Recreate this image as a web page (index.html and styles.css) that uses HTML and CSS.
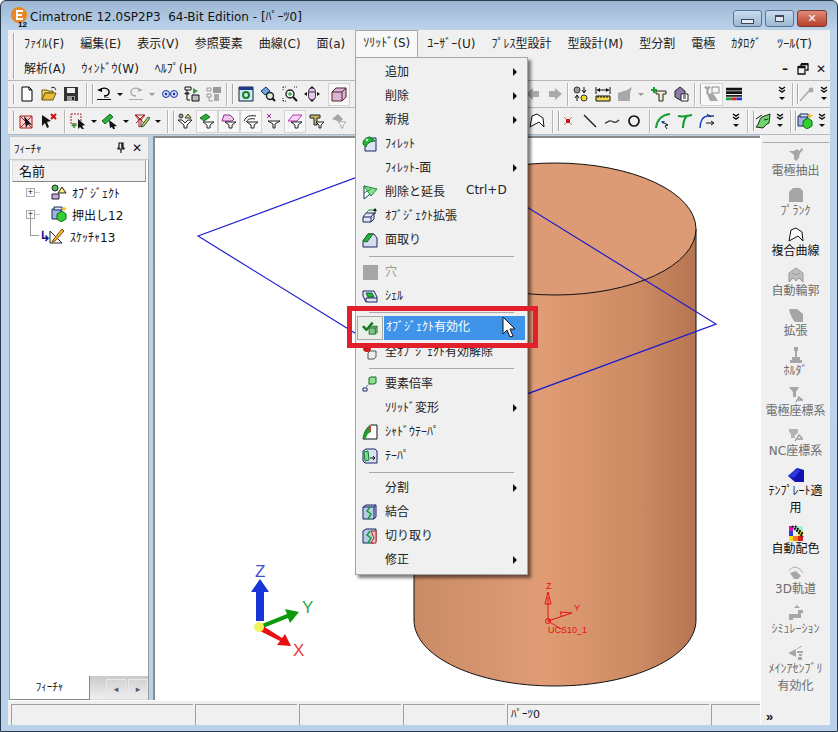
FILE: index.html
```html
<!doctype html>
<html lang="ja">
<head>
  <meta charset="utf-8">
  <title>CimatronE</title>
  <link rel="stylesheet" href="styles.css">
</head>
<body>
<svg class="sprite" xmlns="http://www.w3.org/2000/svg">
  <symbol id="new" viewBox="0 0 16 16"><path d="M3 1h7l3 3v11H3z" fill="#fff" stroke="#000"/><path d="M10 1v3h3" fill="none" stroke="#000"/></symbol>
  <symbol id="open" viewBox="0 0 16 16"><path d="M1 4h5l1 1h5v2H4l-3 7z" fill="#f4d35e" stroke="#6b5a10"/><path d="M1 14l3-7h11l-3 7z" fill="#e8b93c" stroke="#6b5a10"/><path d="M10 2l3-1 2 3" fill="none" stroke="#222"/></symbol>
  <symbol id="save" viewBox="0 0 16 16"><path d="M1 1h14v14H1z" fill="#333"/><path d="M4 2h8v5H4z" fill="#eee"/><path d="M4 10h8v5H4z" fill="#9a9a9a"/><path d="M9 11h2v3H9z" fill="#222"/></symbol>
  <symbol id="undo" viewBox="0 0 16 16"><path d="M5 3C9 1 14 3 13 7c-.5 2-3 3-5 3" fill="none" stroke="#000" stroke-width="1.300"/><path d="M1 4l5-2v4z" fill="#000"/><path d="M1 13h14v1H1z" fill="#000"/><path d="M8 11h5v1H8z" fill="#888"/></symbol>
  <symbol id="redo" viewBox="0 0 16 16"><path d="M11 3C7 1 2 3 3 7c.5 2 3 3 5 3" fill="none" stroke="#aaa" stroke-width="1.300"/><path d="M15 4l-5-2v4z" fill="#aaa"/><path d="M1 13h14v1H1z" fill="#aaa"/></symbol>
  <symbol id="glasses" viewBox="0 0 16 16"><circle cx="4" cy="8" r="3.500" fill="#cfe0ff" stroke="#1a2f9c"/><circle cx="12" cy="8" r="3.500" fill="#cfe0ff" stroke="#1a2f9c"/><circle cx="4" cy="8" r="1.200" fill="#1a2f9c"/><circle cx="12" cy="8" r="1.200" fill="#1a2f9c"/></symbol>
  <symbol id="attach" viewBox="0 0 16 16"><path d="M1 1h6v3H1zM1 7h4v1H1zM3 4v10h3" fill="none" stroke="#111"/><path d="M8 9h7v6H8z" fill="#bbb" stroke="#111"/><path d="M9 2l5 3-5 3z" fill="#3a9a3a"/></symbol>
  <symbol id="attachoff" viewBox="0 0 16 16"><path d="M7 1h8v6H7z" fill="#999"/><path d="M1 2h4v3H1zM1 8h4v3H1zM3 11v4h4" fill="none" stroke="#999"/><path d="M8 8h5v7H8z" fill="#aaa"/></symbol>
  <symbol id="zoomall" viewBox="0 0 16 16"><path d="M1 1h14v14H1z" fill="#cfe8f5" stroke="#123"/><path d="M1 1h14v3H1z" fill="#1d3a8a"/><circle cx="8" cy="9" r="3" fill="none" stroke="#1b7f2c" stroke-width="2"/></symbol>
  <symbol id="zoomwin" viewBox="0 0 16 16"><path d="M1 5l5-4 4 4-5 4z" fill="#6fa2d8" stroke="#123a7a"/><circle cx="10" cy="10" r="3.500" fill="#d9f0d9" stroke="#222" stroke-width="1.400"/><path d="M12 12l3 3" stroke="#111" stroke-width="2"/></symbol>
  <symbol id="zoomin" viewBox="0 0 16 16"><path d="M1 1h3M1 1v3M12 1h3M1 12v3M1 15h3" stroke="#222" fill="none" stroke-dasharray="1 1"/><circle cx="8" cy="8" r="4" fill="#e6f7e6" stroke="#222" stroke-width="1.400"/><path d="M11 11l4 4" stroke="#111" stroke-width="2"/><path d="M6 8h4M8 6v4" stroke="#1a8a2a"/></symbol>
  <symbol id="pan" viewBox="0 0 16 16"><rect x="4.500" y="2" width="7" height="12" rx="3.500" fill="#e7c6ef" stroke="#333"/><path d="M8 0l2 2H6zM8 16l-2-2h4zM0 8l3-2v4zM16 8l-3-2v4z" fill="#111"/><path d="M5 6h6" stroke="#333"/></symbol>
  <symbol id="box" viewBox="0 0 16 16"><path d="M1 6l4-4h10v9l-4 4H1z" fill="#d8b4d8" stroke="#522"/><path d="M1 6h10v9M11 6l4-4" fill="none" stroke="#522"/></symbol>
  <symbol id="arrowL" viewBox="0 0 16 16"><path d="M1 8l7-6v3h6v6H8v3z" fill="#aaa"/></symbol>
  <symbol id="arrowR" viewBox="0 0 16 16"><path d="M15 8L8 2v3H2v6h6v3z" fill="#aaa"/></symbol>
  <symbol id="swap" viewBox="0 0 16 16"><circle cx="4" cy="4" r="3" fill="#999" stroke="#333"/><circle cx="11" cy="12" r="3" fill="#f0e020" stroke="#333"/><path d="M11 1v5M9 4l2 3 2-3M4 15V10M2 12l2-3 2 3" stroke="#111" fill="none"/></symbol>
  <symbol id="measure" viewBox="0 0 16 16"><path d="M1 1v7M15 1v7M2 4h12" stroke="#111" fill="none"/><path d="M2 4l3-2v4zM14 4l-3-2v4z" fill="#111"/><path d="M1 10h14v5H1z" fill="#f0d850" stroke="#111"/><path d="M3 10v2M6 10v2M9 10v2M12 10v2" stroke="#111"/></symbol>
  <symbol id="graybox" viewBox="0 0 16 16"><path d="M1 7l9-3 5-3-2 6v8H1z" fill="#a8a8a8"/></symbol>
  <symbol id="newt" viewBox="0 0 16 16"><path d="M5 5h10v3h-3v7H8V8H5z" fill="#f5e9c8" stroke="#222"/><path d="M3 1v6M0 4h6" stroke="#1a9a2a" stroke-width="2"/></symbol>
  <symbol id="cubes" viewBox="0 0 16 16"><path d="M2 5l5-4 5 4v6l-5 3-5-3z" fill="#8e7aa8" stroke="#222"/><path d="M8 8h7v7H8z" fill="#fff" stroke="#222"/><path d="M10 10h3M10 12h3" stroke="#222"/></symbol>
  <symbol id="grayt" viewBox="0 0 16 16"><path d="M1 1h5v1H4v6H3V2H1zM8 1h7v6H8z" fill="none" stroke="#8a8a8a"/><path d="M3 8l5-1 3 3 3 5H6z" fill="#a6a6a6"/></symbol>
  <symbol id="table" viewBox="0 0 18 16"><path d="M0 1h18v3H0zM0 5h18v3H0z" fill="#111"/><path d="M0 9h18v2H0z" fill="#222"/><path d="M0 12h6v3H0z" fill="#1a9a3a"/><path d="M6 12h6v3H6z" fill="#d02020"/><path d="M12 12h6v3h-6z" fill="#1a3fd0"/></symbol>
  <symbol id="stick" viewBox="0 0 16 16"><path d="M1 15L10 5" stroke="#aaa" stroke-width="1.500"/><circle cx="12" cy="4" r="2.500" fill="#aaa"/></symbol>
  <symbol id="chev" viewBox="0 0 12 16"><path d="M3 1l3 2 3-2M3 4l3 2 3-2" fill="none" stroke="#111" stroke-width="1.500"/><path d="M3 11h6l-3 3z" fill="#111"/></symbol>
  <symbol id="boxsel" viewBox="0 0 16 16"><path d="M1 3h12v12H1z" fill="#f4d0d0" stroke="#a22"/><path d="M1 3l12 12M13 3L1 15" stroke="#a22"/><path d="M5 3l8 9-4-1-2 4z" fill="#111"/></symbol>
  <symbol id="cursorx" viewBox="0 0 16 16"><path d="M1 2l9 6-4 1 2 5-2 1-2-5-3 3z" fill="#111"/><path d="M10 1l5 5M15 1l-5 5" stroke="#d01010" stroke-width="2"/></symbol>
  <symbol id="selplus" viewBox="0 0 16 16"><path d="M1 1h10v10H1z" fill="none" stroke="#a12020" stroke-dasharray="2 1"/><path d="M8 6l7 6-3 1 2 3-2 0-2-2-2 2z" fill="#111"/><path d="M4 10v5M1.500 12.500h5" stroke="#1a9a2a" stroke-width="1.500"/></symbol>
  <symbol id="selgreen" viewBox="0 0 16 16"><path d="M0 8l8-7 3 3-8 7z" fill="#2eae3a" stroke="#166a20"/><path d="M7 7l8 6-3 .5 1 2.500-2 0-1-2-2 1z" fill="#111"/></symbol>
  <symbol id="pencil" viewBox="0 0 16 16"><path d="M1 2h10L7 7v6l-2 1V7z" fill="none" stroke="#a12020"/><path d="M2 2l8 8M10 2L2 10" stroke="#a12020"/><path d="M8 12l6-8 2 1-6 8-3 1z" fill="#e0c060" stroke="#1a6a2a"/></symbol>
  <symbol id="ftri" viewBox="0 0 16 16"><path d="M1 7h4l3 3 3-3h4l-5 5v3H7v-3z" fill="#fff" stroke="#222"/><circle cx="4" cy="3" r="2" fill="#999" stroke="#333"/><path d="M11 1l3 4H8z" fill="#f0e060" stroke="#333"/></symbol>
  <symbol id="fgreen" viewBox="0 0 16 16"><path d="M1 5l6-4 4 3-6 4z" fill="#2eae3a" stroke="#166a20"/><path d="M4 9h11l-4 3v3H8v-3z" fill="#fff" stroke="#222"/></symbol>
  <symbol id="fface" viewBox="0 0 16 16"><path d="M1 8l2-6h6l4 4-2 2z" fill="#f0c8f0" stroke="#922a92"/><path d="M4 9h11l-4 3v3H8v-3z" fill="#fff" stroke="#222"/></symbol>
  <symbol id="fedge" viewBox="0 0 16 16"><path d="M1 8c2-5 6-6 12-5M3 9c2-3 5-4 9-3" fill="none" stroke="#222"/><path d="M4 9h11l-4 3v3H8v-3z" fill="#fff" stroke="#222"/></symbol>
  <symbol id="fpoint" viewBox="0 0 16 16"><path d="M2 1l4 4M6 1L2 5" stroke="#a01a9a"/><path d="M3 8h12l-5 3v4H8v-4z" fill="#fff" stroke="#222"/></symbol>
  <symbol id="fplane" viewBox="0 0 16 16"><path d="M1 8l5-6h9l-5 6z" fill="#f8d8f8" stroke="#b030b0"/><path d="M4 9h11l-4 3v3H8v-3z" fill="#fff" stroke="#222"/></symbol>
  <symbol id="ftool" viewBox="0 0 16 16"><path d="M1 2h10v3H8v7H5V5H1z" fill="#c8b860" stroke="#222"/><path d="M7 9h8l-3 3v3h-2v-3z" fill="#fff" stroke="#222"/></symbol>
  <symbol id="fgray" viewBox="0 0 16 16"><path d="M1 6l6-5 5 5-3 3z" fill="#a6a6a6"/><path d="M7 9h8l-3 3v3h-2v-3z" fill="#fff" stroke="#aaa"/></symbol>
  <symbol id="outline" viewBox="0 0 16 16"><path d="M1 14l2-11 5-2 6 4 1 9-5-5z" fill="#fff" stroke="#111"/></symbol>
  <symbol id="reddot" viewBox="0 0 16 16"><path d="M6 6h4v4H6z" fill="#c01818"/><path d="M4 4l8 8M12 4l-8 8" stroke="#c01818" stroke-width=".6"/></symbol>
  <symbol id="line" viewBox="0 0 16 16"><path d="M2 2l12 12" stroke="#111" stroke-width="1.300"/></symbol>
  <symbol id="spline" viewBox="0 0 16 16"><path d="M1 10c3 0 3-3 6-2s4 3 8-1" fill="none" stroke="#333" stroke-width="1.300"/></symbol>
  <symbol id="circle" viewBox="0 0 16 16"><circle cx="8" cy="8" r="5" fill="none" stroke="#111" stroke-width="1.700"/></symbol>
  <symbol id="fillet" viewBox="0 0 16 16"><path d="M1 15C2 6 7 2 15 1" fill="none" stroke="#1aa03a" stroke-width="2"/><path d="M7 9l6 3-3 1 2 3" fill="none" stroke="#111"/><path d="M6 8l4 0-2 3z" fill="#1a3fc0"/></symbol>
  <symbol id="trim" viewBox="0 0 16 16"><path d="M1 3c5 1 10 0 14-1M6 15c0-5 1-9 4-12" fill="none" stroke="#109a30" stroke-width="2"/></symbol>
  <symbol id="extend" viewBox="0 0 16 16"><path d="M1 15C1 8 4 3 9 3h6" fill="none" stroke="#1a3fc0" stroke-width="1.400"/><path d="M7 10h7M12 8l3 2-3 2M8 1l4 3" stroke="#111" fill="none"/></symbol>
  <symbol id="surf" viewBox="0 0 16 16"><path d="M1 14C4 12 4 6 7 4l8-3-1 9c-3 1-5 4-6 5z" fill="#6ed86e" stroke="#222"/><path d="M9 7l4-1" stroke="#222"/><path d="M1 6l6-4" stroke="#111"/></symbol>
  <symbol id="extrude" viewBox="0 0 16 16"><path d="M1 3h9v10H1z" fill="#9fb4e0" stroke="#1a2a5a"/><path d="M3 1h8v3H3z" fill="#d8e0f0" stroke="#1a2a5a"/><path d="M6 8l5-3 4 3v5l-5 3-4-3z" fill="#2fd02f" stroke="#116a11"/><path d="M13 0l1 2 2 .5-2 1-1 2-1-2-2-1 2-.5z" fill="#f2c01a"/></symbol>
  <symbol id="objs" viewBox="0 0 16 16"><circle cx="4" cy="4" r="3" fill="#4fbf5f" stroke="#222"/><path d="M11 3l4 6H7z" fill="#f6ee80" stroke="#222"/><path d="M1 10h7v5H1z" fill="#c8a8e0" stroke="#222"/></symbol>
  <symbol id="sketch" viewBox="0 0 16 16"><path d="M1 15V3l12 12z" fill="#fff" stroke="#222"/><path d="M4 12l9-11 2 2-9 10-3 1z" fill="#f0b830" stroke="#7a4a10"/></symbol>
  <symbol id="pinned" viewBox="0 0 10 12"><path d="M3 1h4v5h1v1H2V6h1zM5 7v4" fill="none" stroke="#111" stroke-width="1.200"/><path d="M6 1v5" stroke="#111" stroke-width="1.500"/></symbol>
  <symbol id="restore" viewBox="0 0 12 12"><path d="M4 1h7v6H9M4 1v2M1 4h7v7H1z" fill="none" stroke="#111" stroke-width="1.300"/><path d="M1 4h7M4 1h7" stroke="#111" stroke-width="2.400"/></symbol>
  <symbol id="mfillet" viewBox="0 0 16 16"><path d="M3 15V6l5-4h6v13z" fill="#dce4f2" stroke="#1a2266"/><path d="M1 8C1 3 5 1 8 1l5 4C9 5 5 7 4 11z" fill="#23b23a" stroke="#116a22"/><circle cx="5" cy="4" r="1.300" fill="#c8f0c8"/></symbol>
  <symbol id="mdelext" viewBox="0 0 16 16"><path d="M2 2v13l11-9z" fill="#fff" stroke="#123a5a"/><path d="M2 2l13 3-6 7z" fill="#8fe08f" stroke="#1a8a3a"/><path d="M2 9l7-4" stroke="#1a8a3a"/></symbol>
  <symbol id="mobjext" viewBox="0 0 16 16"><path d="M1 9l3-4h8v6l-3 3H1z" fill="#e6e6f2" stroke="#1a2266"/><path d="M1 9h8v5M9 9l3-4" fill="none" stroke="#1a2266"/><path d="M3 6l4-4h5" fill="none" stroke="#19903a"/><path d="M13 0l2 3h-1.500v3h-1V3H11z" fill="#111"/></symbol>
  <symbol id="mchamfer" viewBox="0 0 16 16"><path d="M1 9l5-7h6l3 4v9H1z" fill="#d6dce8" stroke="#1a2266"/><path d="M1 9l5-7h5L5 10z" fill="#22b23a" stroke="#116a22"/></symbol>
  <symbol id="mshell" viewBox="0 0 16 16"><path d="M1 3l11 0 3 6v5H4L1 8z" fill="#e6e6f2" stroke="#1a2266"/><path d="M4 5h6l2 4H6z" fill="#22b23a" stroke="#116a22"/><path d="M4 14V10h11" fill="none" stroke="#1a2266"/></symbol>
  <symbol id="mcheck" viewBox="0 0 18 16"><path d="M0 7l2-2 3 3 6-7 2 2-8 9z" fill="#0f7a1f"/><path d="M8 8l2-2h7v7l-2 2H8z" fill="#7fc483" stroke="#2a6a3a"/><path d="M8 8h7v7M15 8l2-2" fill="none" stroke="#2a6a3a"/></symbol>
  <symbol id="mred" viewBox="0 0 16 16"><circle cx="5" cy="4" r="4" fill="#d01a1a"/><path d="M6 9l2-2h6v6l-2 2H6z" fill="#eee" stroke="#555"/></symbol>
  <symbol id="mscale" viewBox="0 0 16 16"><path d="M7 2l2-1h5v6l-2 1H7z" fill="#8ee08e" stroke="#116a22"/><path d="M1 12h4v3H1z" fill="#fff" stroke="#1a2266"/><path d="M4 11l3-3" stroke="#1a2266" stroke-dasharray="1 1"/></symbol>
  <symbol id="mshadow" viewBox="0 0 16 16"><path d="M1 15C2 8 5 3 9 1h6v14z" fill="#fff" stroke="#111"/><path d="M1 15C2 8 5 3 9 1v7C6 9 4 12 4 15z" fill="#17a52e"/><path d="M6 5l3-4v7z" fill="#c84040"/></symbol>
  <symbol id="mtaper" viewBox="0 0 16 16"><path d="M1 3l3-2h9l2 2v12H3l-2-2z" fill="#d6e2ee" stroke="#1a2266"/><path d="M2 4l4-1 1 9-4 1z" fill="#7bde8a" stroke="#0f7a2f"/><path d="M8 10h5M11 8l2 2-2 2" stroke="#111" fill="none"/></symbol>
  <symbol id="mjoin" viewBox="0 0 16 16"><path d="M1 3l3-2h10v12l-2 2H1z" fill="#b8cce8" stroke="#1a2266"/><path d="M1 3h11v12M12 3l2-2" fill="none" stroke="#1a2266"/><path d="M8 3L5 7l4 3-3 5" fill="none" stroke="#16a030" stroke-width="1.500"/></symbol>
  <symbol id="mcut" viewBox="0 0 16 16"><path d="M1 3l3-2h10v12l-2 2H1z" fill="#b8cce8" stroke="#1a2266"/><path d="M9 3h5v12H9l3-5z" fill="#f4c8b8" stroke="#c02020"/><path d="M8 3L5 7l4 3-3 5" fill="none" stroke="#16a030" stroke-width="1.500"/></symbol>
  <symbol id="tplt" viewBox="0 0 16 16"><path d="M0 9l9-8 7 2v12H7z" fill="#1212b0"/><path d="M0 9l9-8 3 3-6 7z" fill="#2a3ae0"/></symbol>
  <symbol id="palette" viewBox="0 0 16 16"><path d="M1 1h4v5H1z" fill="#e014b0"/><path d="M1 6h4v5H1z" fill="#2a3ae0"/><path d="M1 11h4v5H1z" fill="#f2e010"/><path d="M5 1h5v5H5z" fill="#b0e8e8"/><path d="M10 1h5v5h-5z" fill="#a8f0d0"/><path d="M10 6h5v5h-5z" fill="#e8e040"/><path d="M5 11h5v5H5z" fill="#f08020"/><path d="M10 11h5v5h-5z" fill="#d82020"/><path d="M4 1l11 11M7 1l8 8" stroke="#111" stroke-width="2" stroke-dasharray="2 1"/></symbol>
  <symbol id="gelec" viewBox="0 0 16 16"><path d="M1 4h5l3-2 2 2 3-3 1 2-3 3-1 5-3 3-2-2V8z" fill="#a6a6a6"/></symbol>
  <symbol id="gblank" viewBox="0 0 16 16"><path d="M1 5l4-4h7l3 3v11H1z" fill="#a6a6a6"/></symbol>
  <symbol id="gauto" viewBox="0 0 16 16"><path d="M1 15V6l7-5 7 5v9l-4-4-3 3-3-3z" fill="#bdbdbd" stroke="#999"/><path d="M4 6l4 2 4-2" fill="none" stroke="#999"/></symbol>
  <symbol id="gext" viewBox="0 0 16 16"><path d="M1 2h8l6 5v8H7C4 12 2 7 1 2z" fill="#a6a6a6"/></symbol>
  <symbol id="ghold" viewBox="0 0 16 16"><path d="M6 0h4v4H9v6h3v3h2v3H2v-3h2v-3h3V4H6z" fill="#a6a6a6"/></symbol>
  <symbol id="gucs" viewBox="0 0 16 16"><path d="M1 0h10L8 5v5H5V5z" fill="#a6a6a6"/><path d="M8 15l3-5 3 3M10 13h5" fill="none" stroke="#999" stroke-width="1.300"/></symbol>
  <symbol id="gnc" viewBox="0 0 16 16"><path d="M1 2h9v4l-3 2v3H3V7L1 5z" fill="#b4b4b4"/><path d="M7 14l4-6 3 3M9 12h6" fill="none" stroke="#999" stroke-width="1.300"/></symbol>
  <symbol id="g3d" viewBox="0 0 16 16"><path d="M1 6c3-5 9-6 14 2" fill="none" stroke="#aaa"/><path d="M2 8l6-2 5 5-3 3H6z" fill="#a6a6a6"/></symbol>
  <symbol id="gsim" viewBox="0 0 16 16"><path d="M1 9h9V5h5v3h-2v5H5v2H1z" fill="#a6a6a6"/><path d="M9 0l3 3H6z" fill="#a6a6a6"/></symbol>
  <symbol id="gmain" viewBox="0 0 16 16"><path d="M0 8l8-4v8zM9 6h6v2H9zM11 9h3v2h-3zM10 12h4v3h-4z" fill="#a6a6a6"/><path d="M9 4l5-3" stroke="#aaa"/></symbol>
  <symbol id="logo" viewBox="0 0 20 20"><circle cx="9" cy="9" r="8" fill="#e98722"/><path d="M6 4h7v2H8v2h4v2H8v2h5v2H6z" fill="#fff"/></symbol>
</svg>

<div class="window">
  <header class="titlebar">
    <svg class="logo"><use href="#logo"/></svg><span class="num">12</span>
    <span class="title">CimatronE 12.0SP2P3&nbsp; 64-Bit Edition - [ﾊﾟｰﾂ0]</span>
    <div class="winbtns">
      <span class="wb wb-min"><i></i></span>
      <span class="wb wb-max"><i></i></span>
      <span class="wb wb-close">✕</span>
    </div>
  </header>

  <nav class="menubar">
    <div class="menurow">
      <span class="grip tall"></span>
      <span class="mi">ﾌｧｲﾙ(F)</span><span class="mi">編集(E)</span><span class="mi">表示(V)</span><span class="mi">参照要素</span><span class="mi">曲線(C)</span><span class="mi">面(a)</span><span class="mi open-item">ｿﾘｯﾄﾞ(S)</span><span class="mi">ﾕｰｻﾞｰ(U)</span><span class="mi">ﾌﾟﾚｽ型設計</span><span class="mi">型設計(M)</span><span class="mi">型分割</span><span class="mi">電極</span><span class="mi">ｶﾀﾛｸﾞ</span><span class="mi">ﾂｰﾙ(T)</span>
    </div>
    <div class="menurow second">
      <span class="mi">解析(A)</span><span class="mi">ｳｨﾝﾄﾞｳ(W)</span><span class="mi">ﾍﾙﾌﾟ(H)</span>
      <div class="mdi"><b>–</b><svg class="restore"><use href="#restore"/></svg><b>✕</b></div>
    </div>
  </nav>

  <div class="toolbar">
    <span class="grip"></span>
    <span class="btn"><svg class="i"><use href="#new"/></svg></span>
    <span class="btn"><svg class="i"><use href="#open"/></svg></span>
    <span class="btn"><svg class="i"><use href="#save"/></svg></span>
    <span class="sep"></span><span class="grip g2"></span>
    <span class="btn"><svg class="i"><use href="#undo"/></svg></span><span class="drop"></span>
    <span class="btn"><svg class="i"><use href="#redo"/></svg></span><span class="drop off"></span>
    <span class="btn"><svg class="i"><use href="#glasses"/></svg></span>
    <span class="btn"><svg class="i"><use href="#attach"/></svg></span>
    <span class="btn"><svg class="i"><use href="#attachoff"/></svg></span>
    <span class="sep s1"></span><span class="grip g2"></span>
    <span class="btn ml2"><svg class="i"><use href="#zoomall"/></svg></span>
    <span class="btn"><svg class="i"><use href="#zoomwin"/></svg></span>
    <span class="btn"><svg class="i"><use href="#zoomin"/></svg></span>
    <span class="btn"><svg class="i"><use href="#pan"/></svg></span>
    <span class="btn pressed ml5"><svg class="i"><use href="#box"/></svg></span>
    <span class="hidden-run r1"></span>
    <span class="btn"><svg class="i"><use href="#arrowL"/></svg></span>
    <span class="btn"><svg class="i"><use href="#arrowR"/></svg></span>
    <span class="sep s1"></span>
    <span class="btn"><svg class="i"><use href="#swap"/></svg></span>
    <span class="btn"><svg class="i"><use href="#measure"/></svg></span>
    <span class="btn"><svg class="i"><use href="#graybox"/></svg></span><span class="drop off"></span>
    <span class="btn"><svg class="i"><use href="#newt"/></svg></span>
    <span class="btn"><svg class="i"><use href="#cubes"/></svg></span>
    <span class="sep s2"></span><span class="grip g2"></span>
    <span class="btn pressed"><svg class="i"><use href="#grayt"/></svg></span>
    <span class="btn"><svg class="i"><use href="#table"/></svg></span>
    <svg class="more auto"><use href="#chev"/></svg>
    <span class="sep s-end"></span><span class="grip g1"></span>
    <span class="btn"><svg class="i"><use href="#stick"/></svg></span>
    <svg class="more"><use href="#chev"/></svg>
  </div>

  <div class="toolbar">
    <span class="grip"></span>
    <span class="btn"><svg class="i"><use href="#boxsel"/></svg></span>
    <span class="btn"><svg class="i"><use href="#cursorx"/></svg></span>
    <span class="sep"></span>
    <span class="btn"><svg class="i"><use href="#selplus"/></svg></span><span class="drop"></span>
    <span class="btn"><svg class="i"><use href="#selgreen"/></svg></span><span class="drop"></span>
    <span class="btn"><svg class="i"><use href="#pencil"/></svg></span><span class="drop"></span>
    <span class="sep"></span><span class="grip g2"></span>
    <span class="btn"><svg class="i"><use href="#ftri"/></svg></span>
    <span class="btn pressed"><svg class="i"><use href="#fgreen"/></svg></span>
    <span class="btn pressed"><svg class="i"><use href="#fface"/></svg></span>
    <span class="btn pressed"><svg class="i"><use href="#fedge"/></svg></span>
    <span class="btn"><svg class="i"><use href="#fpoint"/></svg></span>
    <span class="btn pressed"><svg class="i"><use href="#fplane"/></svg></span>
    <span class="btn"><svg class="i"><use href="#ftool"/></svg></span>
    <span class="btn"><svg class="i"><use href="#fgray"/></svg></span>
    <span class="hidden-run r2"></span>
    <span class="btn"><svg class="i"><use href="#outline"/></svg></span>
    <span class="sep"></span><span class="grip g1"></span>
    <span class="btn"><svg class="i"><use href="#reddot"/></svg></span>
    <span class="btn"><svg class="i"><use href="#line"/></svg></span>
    <span class="btn"><svg class="i"><use href="#spline"/></svg></span>
    <span class="btn"><svg class="i"><use href="#circle"/></svg></span>
    <span class="sep"></span>
    <span class="btn"><svg class="i"><use href="#fillet"/></svg></span>
    <span class="btn"><svg class="i"><use href="#trim"/></svg></span>
    <span class="btn"><svg class="i"><use href="#extend"/></svg></span>
    <svg class="more ml12"><use href="#chev"/></svg>
    <span class="sep s5"></span><span class="grip g1"></span>
    <span class="btn"><svg class="i"><use href="#surf"/></svg></span>
    <svg class="more"><use href="#chev"/></svg>
    <span class="sep s-end"></span><span class="grip g1"></span>
    <span class="btn"><svg class="i"><use href="#extrude"/></svg></span>
    <svg class="more"><use href="#chev"/></svg>
  </div>

  <div class="workarea">
    <div class="leftcol">
      <div class="mainrow">
        <aside class="feature">
          <div class="panelhead">
            <span class="paneltitle">ﾌｨｰﾁｬ</span>
            <svg class="pin"><use href="#pinned"/></svg>
            <span class="panelx">✕</span>
          </div>
          <div class="treebox">
            <div class="colhead">名前</div>
            <ul class="tree">
              <li><span class="plus">+</span><svg class="i"><use href="#objs"/></svg><span class="nm">ｵﾌﾞｼﾞｪｸﾄ</span></li>
              <li><span class="plus">+</span><svg class="i"><use href="#extrude"/></svg><span class="nm">押出し12</span></li>
              <li class="leaf"><span class="elbow"></span><span class="hook">↳</span><svg class="i"><use href="#sketch"/></svg><span class="nm">ｽｹｯﾁｬ13</span></li>
            </ul>
            <div class="tabrow">
              <span class="tab">ﾌｨｰﾁｬ</span>
              <div class="tabgap">
                <span class="scroll">◂</span><span class="scroll">▸</span>
              </div>
            </div>
          </div>
        </aside>
        <main class="viewport">
          <svg class="scene" viewBox="155 136 605 564" xmlns="http://www.w3.org/2000/svg">
            <defs>
              <linearGradient id="side" x1="0" x2="1" y1="0" y2="0">
                <stop offset="0" stop-color="#c98b66"/>
                <stop offset=".45" stop-color="#e09c75"/>
                <stop offset=".8" stop-color="#cc8a63"/>
                <stop offset="1" stop-color="#b67551"/>
              </linearGradient>
            </defs>
            <path d="M414 229V620C414 657 477 686 555 686S696 657 696 620V229z" fill="url(#side)" stroke="#111"/>
            <ellipse cx="555" cy="229" rx="141" ry="66" fill="#dc9b74" stroke="#111"/>
            <path d="M198 236L433 149 716 324 481 411z" fill="none" stroke="#1a1ad0" stroke-width="1.200"/>
            <path d="M256 621V592h-5l9-13 9 13h-5v29z" fill="#1836d8"/>
            <path d="M262 624l25-10-2-5 14 3-9 11-2-5-25 10z" fill="#0c9a0c"/>
            <path d="M260 631l3-5 19 12 3-4 6 12-14-1 3-4z" fill="#e81010"/>
            <circle cx="259" cy="627" r="5" fill="#f2f25a"/>
            <text class="axis az" x="255" y="577">Z</text>
            <text class="axis ay" x="302" y="613">Y</text>
            <text class="axis ax" x="293" y="656">X</text>
            <path d="M548 621v-24M548 592l-3 12h6zM548 621l24-8M572 613l-12-1 2 5M548 621l13 8" fill="none" stroke="#e81010"/>
            <circle cx="548" cy="621" r="2.500" fill="none" stroke="#e81010"/>
            <text class="ucs" x="546" y="589">Z</text>
            <text class="ucs" x="574" y="611">Y</text>
            <text class="ucs" x="548" y="633">UCS10_1</text>
          </svg>
        </main>
      </div>
      <footer class="statusbar">
        <span class="pane p1"></span><span class="pane p2"></span><span class="pane p2"></span><span class="pane p2"></span><span class="pane p3">ﾊﾟｰﾂ0</span><span class="pane p4"></span>
      </footer>
    </div>
    <aside class="sidebar">
      <div class="hgrip"></div>
      <div class="tool off"><svg class="i"><use href="#gelec"/></svg><span>電極抽出</span></div>
      <div class="tool off"><svg class="i"><use href="#gblank"/></svg><span>ﾌﾟﾗﾝｸ</span></div>
      <div class="tool"><svg class="i"><use href="#outline"/></svg><span>複合曲線</span></div>
      <div class="tool off"><svg class="i"><use href="#gauto"/></svg><span>自動輪郭</span></div>
      <div class="tool off"><svg class="i"><use href="#gext"/></svg><span>拡張</span></div>
      <div class="tool off"><svg class="i"><use href="#ghold"/></svg><span>ﾎﾙﾀﾞ</span></div>
      <div class="tool off"><svg class="i"><use href="#gucs"/></svg><span>電極座標系</span></div>
      <div class="tool off"><svg class="i"><use href="#gnc"/></svg><span>NC座標系</span></div>
      <div class="tool two"><svg class="i"><use href="#tplt"/></svg><span>ﾃﾝﾌﾟﾚｰﾄ適<br>用</span></div>
      <div class="tool"><svg class="i"><use href="#palette"/></svg><span>自動配色</span></div>
      <div class="tool off"><svg class="i"><use href="#g3d"/></svg><span>3D軌道</span></div>
      <div class="tool off"><svg class="i"><use href="#gsim"/></svg><span>ｼﾐｭﾚｰｼｮﾝ</span></div>
      <div class="tool off two"><svg class="i"><use href="#gmain"/></svg><span>ﾒｲﾝｱｾﾝﾌﾞﾘ<br>有効化</span></div>
      <div class="overflow">»</div>
    </aside>
  </div>

  <div class="popup">
    <div class="row"><span class="ic"></span><span class="lb">追加</span><span class="arr"></span></div>
    <div class="row"><span class="ic"></span><span class="lb">削除</span><span class="arr"></span></div>
    <div class="row"><span class="ic"></span><span class="lb">新規</span><span class="arr"></span></div>
    <div class="row"><span class="ic"><svg class="i"><use href="#mfillet"/></svg></span><span class="lb">ﾌｨﾚｯﾄ</span></div>
    <div class="row"><span class="ic"></span><span class="lb">ﾌｨﾚｯﾄ-面</span><span class="arr"></span></div>
    <div class="row"><span class="ic"><svg class="i"><use href="#mdelext"/></svg></span><span class="lb">削除と延長</span><span class="key">Ctrl+D</span></div>
    <div class="row"><span class="ic"><svg class="i"><use href="#mobjext"/></svg></span><span class="lb">ｵﾌﾞｼﾞｪｸﾄ拡張</span></div>
    <div class="row"><span class="ic"><svg class="i"><use href="#mchamfer"/></svg></span><span class="lb">面取り</span></div>
    <div class="rule"></div>
    <div class="row dis"><span class="ic"><i class="graysq"></i></span><span class="lb">穴</span></div>
    <div class="row"><span class="ic"><svg class="i"><use href="#mshell"/></svg></span><span class="lb">ｼｪﾙ</span></div>
    <div class="rule"></div>
    <div class="row hot"><span class="ic"><svg class="i"><use href="#mcheck"/></svg></span><span class="lb">ｵﾌﾞｼﾞｪｸﾄ有効化</span></div>
    <div class="row"><span class="ic"><svg class="i"><use href="#mred"/></svg></span><span class="lb">全ｵﾌﾞｼﾞｪｸﾄ有効解除</span></div>
    <div class="rule"></div>
    <div class="row"><span class="ic"><svg class="i"><use href="#mscale"/></svg></span><span class="lb">要素倍率</span></div>
    <div class="row"><span class="ic"></span><span class="lb">ｿﾘｯﾄﾞ変形</span><span class="arr"></span></div>
    <div class="row"><span class="ic"><svg class="i"><use href="#mshadow"/></svg></span><span class="lb">ｼｬﾄﾞｳﾃｰﾊﾟ</span></div>
    <div class="row"><span class="ic"><svg class="i"><use href="#mtaper"/></svg></span><span class="lb">ﾃｰﾊﾟ</span></div>
    <div class="rule"></div>
    <div class="row"><span class="ic"></span><span class="lb">分割</span><span class="arr"></span></div>
    <div class="row"><span class="ic"><svg class="i"><use href="#mjoin"/></svg></span><span class="lb">結合</span></div>
    <div class="row"><span class="ic"><svg class="i"><use href="#mcut"/></svg></span><span class="lb">切り取り</span></div>
    <div class="row"><span class="ic"></span><span class="lb">修正</span><span class="arr"></span></div>
  </div>

  <div class="redbox"></div>
  <svg class="pointer" viewBox="0 0 14 22"><path d="M1 1v17l4-4 3 7 3-1-3-7h5z" fill="#fff" stroke="#111"/></svg>
</div>
</body>
</html>
```
FILE: styles.css
```css
/* page + window frame */
html, body {
  margin: 0;
  background: #fff;
}
body {
  font-family: "DejaVu Sans", "Noto Sans CJK JP", sans-serif;
  font-size: 12px;
  color: #111;
}
.sprite {
  display: none;
}
.window {
  position: relative;
  width: 838px;
  height: 732px;
  box-sizing: border-box;
  padding: 0 7px 6px;
  display: flex;
  flex-direction: column;
  overflow: hidden;
  border: 1px solid #2b3a4a;
  border-radius: 6px 6px 0 0;
  background: linear-gradient(180deg, #9db6d2 0, #bcd4ec 30px, #b9d1ea 100%);
}
.i {
  width: 16px;
  height: 16px;
  display: block;
  flex: none;
}

/* title bar */
.titlebar {
  height: 29px;
  flex: none;
  display: flex;
  align-items: center;
  position: relative;
  margin-left: 2px;
}
.logo {
  width: 20px;
  height: 20px;
}
.num {
  position: absolute;
  left: 8px;
  top: 19px;
  font: bold 8px "Liberation Sans", sans-serif;
  color: #000;
}
.title {
  font-size: 12px;
  color: #111;
  white-space: pre;
}
.winbtns {
  margin-left: auto;
  display: flex;
  gap: 3px;
  margin-right: 3px;
  align-self: flex-start;
  margin-top: 9px;
}
.wb {
  width: 29px;
  height: 17px;
  box-sizing: border-box;
  border: 1px solid #5a7590;
  border-radius: 3px;
  background: linear-gradient(#c8dcef, #9db8d3);
  display: flex;
  align-items: center;
  justify-content: center;
}
.wb-min i {
  width: 11px;
  height: 3px;
  margin-top: 5px;
  background: #e8eef5;
  border: 1px solid #445;
}
.wb-max i {
  width: 9px;
  height: 7px;
  background: #dfe8f2;
  border: 1px solid #445;
  box-sizing: border-box;
  box-shadow: inset 0 1px 0 #445;
}
.wb-close {
  width: 30px;
  background: linear-gradient(#e08a78, #b8402c);
  border-color: #7a3a30;
  color: #fff;
  font-size: 11px;
  font-weight: bold;
}

/* menu bar */
.menubar {
  background: #f0f0f0;
  height: 51px;
  box-sizing: border-box;
  flex: none;
  border-bottom: 1px solid #b8b8b8;
}
.menurow {
  display: flex;
  align-items: center;
  height: 27px;
  position: relative;
}
.menurow.second {
  height: 23px;
  padding-left: 8px;
}
.mi {
  padding: 0 8px;
  line-height: 24px;
  white-space: nowrap;
  color: #222;
}
.open-item {
  background: #f8f8f8;
  border: 1px solid #a8a8a8;
  border-bottom: 0;
  height: 27px;
  box-sizing: border-box;
  padding: 0 7px;
  margin: 0 1px 0 2px;
}
.mdi {
  margin-left: auto;
  margin-right: 3px;
  display: flex;
  gap: 6px;
  align-items: center;
  font-size: 12px;
}
.mdi b {
  width: 12px;
  text-align: center;
}
.restore {
  width: 12px;
  height: 12px;
}
.grip {
  width: 6px;
  flex: none;
  align-self: stretch;
  margin: 3px 0;
  position: relative;
}
.grip::before {
  content: "";
  position: absolute;
  left: 3px;
  top: 0;
  bottom: 0;
  width: 1px;
  background: #a5a5a5;
  box-shadow: 1px 0 0 #fff;
}
.grip.tall {
  width: 8px;
  margin: 3px 0 -22px;
  z-index: 1;
}
.grip.tall::before {
  left: 5px;
}
.grip.g2 {
  width: 4px;
}
.grip.g1 {
  width: 2px;
}

/* toolbars */
.toolbar {
  height: 27px;
  box-sizing: border-box;
  flex: none;
  display: flex;
  align-items: center;
  background: #f0f0f0;
  border-bottom: 1px solid #b8b8b8;
  padding-left: 2px;
}
.btn {
  width: 22px;
  height: 23px;
  flex: none;
  box-sizing: border-box;
  display: flex;
  align-items: center;
  justify-content: center;
}
.btn.pressed {
  background: #f8f8f8;
  border: 1px solid #d4d4d4;
}
.ml2 {
  margin-left: 2px;
}
.ml5 {
  margin-left: 5px;
}
.ml12 {
  margin-left: 12px;
}
.drop {
  width: 10px;
  height: 23px;
  flex: none;
  position: relative;
}
.drop::before {
  content: "";
  position: absolute;
  left: 2px;
  top: 10px;
  border: 3px solid transparent;
  border-top: 3px solid #111;
  border-bottom: 0;
}
.drop.off {
  width: 12px;
}
.drop.off::before {
  border-top-color: #999;
}
.sep {
  width: 1px;
  height: 23px;
  flex: none;
  margin: 0 2px 0 4px;
  background: #b5b5b5;
  box-shadow: 1px 0 0 #fff;
}
.sep.s1 {
  margin-left: 1px;
}
.sep.s2 {
  margin-left: 2px;
}
.sep.s5 {
  margin-left: 5px;
}
.sep.s-end {
  margin-right: 1px;
}
.hidden-run {
  flex: none;
}
.r1 {
  width: 172px;
}
.r2 {
  width: 176px;
}
.more {
  width: 12px;
  height: 16px;
  flex: none;
}
.more.auto {
  margin-left: auto;
}

/* work area */
.workarea {
  flex: 1;
  display: flex;
  min-height: 0;
}
.leftcol {
  width: 752px;
  display: flex;
  flex-direction: column;
  flex: none;
}
.mainrow {
  flex: 1;
  display: flex;
  min-height: 0;
}
.feature {
  width: 140px;
  margin: 1px 0 0 1px;
  display: flex;
  flex-direction: column;
  flex: none;
  background: #f0f0f0;
}
.panelhead {
  height: 24px;
  flex: none;
  display: flex;
  align-items: center;
  box-sizing: border-box;
  border: 1px solid #c8c8c8;
  padding: 0 4px;
}
.paneltitle {
  flex: 1;
  font-size: 11px;
}
.pin {
  width: 10px;
  height: 12px;
  margin-right: 4px;
}
.panelx {
  font-size: 12px;
  width: 14px;
  font-weight: bold;
  text-align: center;
}
.treebox {
  flex: 1;
  display: flex;
  flex-direction: column;
  background: #fff;
  border-right: 1px solid #999;
  border-left: 1px solid #a0a0a0;
  min-height: 0;
}
.colhead {
  margin: 0 2px;
  height: 22px;
  box-sizing: border-box;
  padding: 0 6px;
  line-height: 21px;
  font-size: 13px;
  background: #f0f0f0;
  border: 1px solid #ddd;
  border-right-color: #999;
  border-bottom-color: #888;
}
.tree {
  list-style: none;
  margin: -1px 0 0;
  padding: 0 0 0 16px;
  flex: 1;
  position: relative;
}
.tree li {
  height: 22px;
  display: flex;
  align-items: center;
  position: relative;
}
.plus {
  width: 9px;
  height: 9px;
  box-sizing: border-box;
  border: 1px solid #aaa;
  font: 9px/7px "Liberation Sans", sans-serif;
  text-align: center;
  margin: 0 14px 0 0;
  flex: none;
  position: relative;
}
.plus::after {
  content: "";
  position: absolute;
  left: 8px;
  top: 3px;
  width: 5px;
  border-top: 1px solid #ccc;
}
.tree .i {
  margin-left: 2px;
}
.nm {
  margin-left: 5px;
  white-space: nowrap;
}
.elbow {
  width: 9px;
  height: 22px;
  margin: -22px 0 0 4px;
  box-sizing: border-box;
  border-left: 1px solid #999;
  border-bottom: 1px solid #999;
  flex: none;
}
.hook {
  color: #14148c;
  font-weight: bold;
  font-size: 14px;
  width: 10px;
  flex: none;
  line-height: 1;
}
.tree .leaf .i {
  margin-left: 0;
}
.tabrow {
  height: 24px;
  flex: none;
  display: flex;
}
.tab {
  width: 80px;
  box-sizing: border-box;
  background: #fff;
  border-right: 1px solid #888;
  border-bottom: 1px solid #888;
  text-align: center;
  line-height: 24px;
  font-size: 11px;
}
.tabgap {
  flex: 1;
  display: flex;
  justify-content: flex-end;
  align-items: flex-end;
  gap: 2px;
  background: linear-gradient(#c9c9c9, #f0f0f0);
  border-bottom: 1px solid #ddd;
}
.scroll {
  width: 20px;
  height: 20px;
  box-sizing: border-box;
  border: 1px solid #e8e8e8;
  background: linear-gradient(#d4d4d4, #ececec);
  color: #556;
  font-size: 9px;
  text-align: center;
  line-height: 18px;
}
.viewport {
  flex: 1;
  margin-left: 4px;
  margin-top: 1px;
  background: #fff;
  border-left: 2px solid #8a8a8a;
  border-top: 2px solid #8a8a8a;
  overflow: hidden;
  min-width: 0;
}
.scene {
  display: block;
  width: 605px;
  height: 564px;
  margin: -2px 0 0 0;
}
.axis {
  font: 17px "Liberation Sans", sans-serif;
}
.az {
  fill: #3f50cf;
}
.ay {
  fill: #31a651;
}
.ax {
  fill: #e83838;
}
.ucs {
  font: 9px "Liberation Sans", sans-serif;
  fill: #e81010;
}

/* status bar */
.statusbar {
  height: 25px;
  flex: none;
  display: flex;
  gap: 2px;
  padding: 3px 0 0 3px;
  box-sizing: border-box;
  background: #f0f0f0;
  border-top: 1px solid #fff;
}
.pane {
  box-sizing: border-box;
  height: 21px;
  border-top: 1px solid #a0a0a0;
  border-left: 1px solid #a0a0a0;
  font-size: 11px;
  line-height: 20px;
  padding-left: 3px;
}
.p1 {
  width: 182px;
}
.p2 {
  width: 102px;
}
.p3 {
  width: 202px;
}
.p4 {
  flex: 1;
}

/* right tool strip */
.sidebar {
  flex: 1;
  background: #f0f0f0;
  border-left: 1px solid #fff;
  display: flex;
  flex-direction: column;
  align-items: center;
  position: relative;
  min-width: 0;
}
.hgrip {
  height: 8px;
  width: 66px;
  box-sizing: border-box;
  border-bottom: 1px solid #aaa;
  flex: none;
  margin-bottom: 3px;
}
.tool {
  height: 40px;
  flex: none;
  display: flex;
  flex-direction: column;
  align-items: center;
  justify-content: flex-start;
  width: 100%;
  font-size: 12px;
  line-height: 17px;
  text-align: center;
  color: #111;
  padding-top: 1px;
  box-sizing: border-box;
}
.tool.off {
  color: #6d6d6d;
}
.tool.two {
  height: 58px;
}
.tool span {
  white-space: nowrap;
}
.overflow {
  position: absolute;
  left: 5px;
  bottom: 1px;
  font: bold 13px "Liberation Sans", sans-serif;
}

/* open popup menu */
.popup {
  position: absolute;
  left: 354px;
  top: 56px;
  width: 173px;
  box-sizing: border-box;
  padding: 2px 1px;
  background: #f0f0f0;
  border: 1px solid #a5a5a5;
  box-shadow: 3px 3px 3px rgba(0, 0, 0, .5);
}
.row {
  height: 24px;
  display: flex;
  align-items: center;
  color: #222;
}
.row .ic {
  width: 26px;
  height: 24px;
  flex: none;
  display: flex;
  align-items: center;
  justify-content: center;
  box-sizing: border-box;
}
.row .lb {
  margin-left: 2px;
  padding-bottom: 4px;
  white-space: nowrap;
}
.row .key {
  position: absolute;
  left: 110px;
  padding-bottom: 4px;
}
.row .arr {
  margin-left: auto;
  margin-right: 9px;
  border: 4px solid transparent;
  border-left: 4px solid #111;
  border-right: 0;
}
.row.dis {
  color: #9a9a9a;
}
.graysq {
  width: 15px;
  height: 15px;
  background: #a6a6a6;
  display: block;
}
.rule {
  height: 8px;
  position: relative;
}
.rule::before {
  content: "";
  position: absolute;
  left: 12px;
  right: 12px;
  top: 4px;
  height: 1px;
  background: #a8a8a8;
}
.row.hot {
  color: #fff;
}
.row.hot .ic {
  background: #e8f0e8;
  border: 1px solid #a8a8a8;
  margin-right: 1px;
}
.row.hot .lb {
  margin-left: 0;
  padding: 0 0 0 2px;
  flex: 1;
  height: 24px;
  line-height: 22px;
  margin-right: 1px;
  background: #3f94ea;
}
.redbox {
  position: absolute;
  left: 346px;
  top: 305px;
  width: 191px;
  height: 42px;
  box-sizing: border-box;
  border: 5px solid #e2202c;
}
.pointer {
  position: absolute;
  left: 501px;
  top: 315px;
  width: 14px;
  height: 22px;
}
```
